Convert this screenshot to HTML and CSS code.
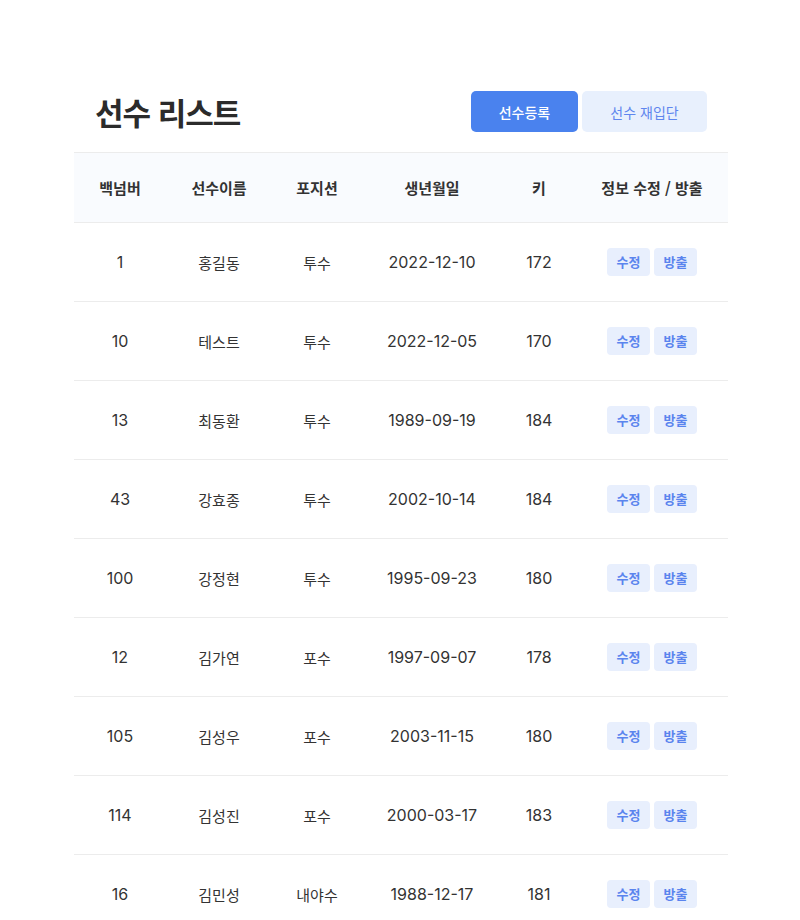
FILE: index.html
```html
<!DOCTYPE html>
<html lang="ko">
<head>
<meta charset="utf-8">
<link rel="stylesheet" href="styles.css">
</head>
<body>
<div class="wrap">
  <div class="top">
    <h1 class="title">선수 리스트</h1>
    <div class="actions">
      <button class="btn btn-primary">선수등록</button>
      <button class="btn btn-light">선수 재입단</button>
    </div>
  </div>
  <table class="list">
    <colgroup>
      <col class="c1"><col class="c2"><col class="c3"><col class="c4"><col class="c5"><col class="c6">
    </colgroup>
    <thead>
      <tr><th>백넘버</th><th>선수이름</th><th>포지션</th><th>생년월일</th><th>키</th><th>정보 수정 / 방출</th></tr>
    </thead>
    <tbody>
      <tr><td class="num">1</td><td>홍길동</td><td>투수</td><td class="num">2022-12-10</td><td class="num">172</td><td><span class="tag">수정</span><span class="tag">방출</span></td></tr>
      <tr><td class="num">10</td><td>테스트</td><td>투수</td><td class="num">2022-12-05</td><td class="num">170</td><td><span class="tag">수정</span><span class="tag">방출</span></td></tr>
      <tr><td class="num">13</td><td>최동환</td><td>투수</td><td class="num">1989-09-19</td><td class="num">184</td><td><span class="tag">수정</span><span class="tag">방출</span></td></tr>
      <tr><td class="num">43</td><td>강효종</td><td>투수</td><td class="num">2002-10-14</td><td class="num">184</td><td><span class="tag">수정</span><span class="tag">방출</span></td></tr>
      <tr><td class="num">100</td><td>강정현</td><td>투수</td><td class="num">1995-09-23</td><td class="num">180</td><td><span class="tag">수정</span><span class="tag">방출</span></td></tr>
      <tr><td class="num">12</td><td>김가연</td><td>포수</td><td class="num">1997-09-07</td><td class="num">178</td><td><span class="tag">수정</span><span class="tag">방출</span></td></tr>
      <tr><td class="num">105</td><td>김성우</td><td>포수</td><td class="num">2003-11-15</td><td class="num">180</td><td><span class="tag">수정</span><span class="tag">방출</span></td></tr>
      <tr><td class="num">114</td><td>김성진</td><td>포수</td><td class="num">2000-03-17</td><td class="num">183</td><td><span class="tag">수정</span><span class="tag">방출</span></td></tr>
      <tr><td class="num">16</td><td>김민성</td><td>내야수</td><td class="num">1988-12-17</td><td class="num">181</td><td><span class="tag">수정</span><span class="tag">방출</span></td></tr>
    </tbody>
  </table>
</div>
</body>
</html>
```

FILE: styles.css
```css
* { box-sizing: border-box; }
html, body { margin: 0; padding: 0; background: #fff; }
body {
  font-family: "Inter", "Noto Sans CJK KR", sans-serif;
  color: #333;
}
.wrap {
  width: 654px;
  margin: 0 72px 0 74px;
  padding-top: 91px;
}
.top {
  display: flex;
  align-items: center;
  justify-content: space-between;
  padding: 0 21px 0 21px;
  height: 41px;
  margin-bottom: 20px;
}
.title {
  margin: 0;
  font-size: 31px;
  font-weight: 700;
  letter-spacing: -1px;
  color: #2b2b2b;
  font-family: "Noto Sans CJK KR", sans-serif;
  line-height: 1;
}
.actions { display: flex; gap: 4px; }
.btn {
  height: 41px;
  border: 0;
  border-radius: 5px;
  font-family: "Noto Sans CJK KR", sans-serif;
  font-size: 14px;
  cursor: pointer;
}
.btn-primary {
  width: 107px;
  background: #4a82ee;
  color: #fff;
  font-weight: 500;
}
.btn-light {
  width: 125px;
  background: #e8f0fd;
  color: #5f86ee;
  font-weight: 400;
}
.list {
  width: 654px;
  border-collapse: collapse;
  table-layout: fixed;
}
.c1 { width: 92px; }
.c2 { width: 106px; }
.c3 { width: 90px; }
.c4 { width: 140px; }
.c5 { width: 74px; }
.c6 { width: 152px; }
.list th {
  height: 70px;
  background: #f9fbfe;
  border-top: 1px solid #ececec;
  border-bottom: 1px solid #ececec;
  font-size: 15px;
  font-weight: 700;
  color: #333;
  text-align: center;
  padding: 0;
  font-family: "Noto Sans CJK KR", sans-serif;
}
.list td {
  height: 79px;
  border-bottom: 1px solid #ececec;
  text-align: center;
  font-size: 15px;
  padding: 0;
  color: #333;
}
.list td.num { font-size: 16px; }
.tag {
  display: inline-block;
  width: 43px;
  height: 28px;
  line-height: 28px;
  border-radius: 4px;
  background: #e8effd;
  color: #5a84ee;
  font-size: 13px;
  font-weight: 700;
  font-family: "Noto Sans CJK KR", sans-serif;
  margin: 0 2px;
  vertical-align: middle;
}
```
